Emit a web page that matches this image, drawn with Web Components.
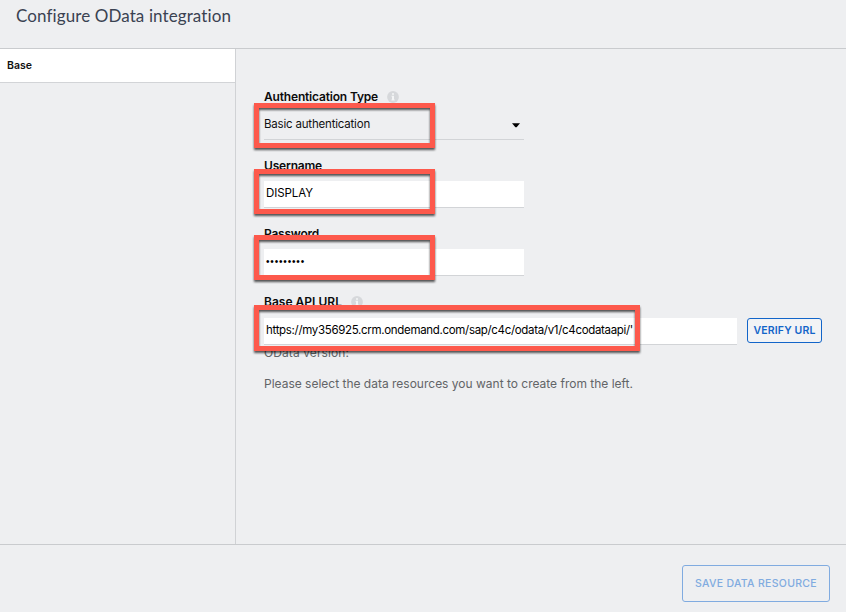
<!DOCTYPE html>
<html lang="en"><head><meta charset="utf-8"><title>Configure OData integration</title>
<style>html,body{margin:0;height:100%;overflow:hidden}body{font-family:Inter,"Open Sans",sans-serif;background:#eeeff1}</style></head>
<body>
<integration-dialog></integration-dialog>
<script>
const define = (name, html, init) => customElements.define(name, class extends HTMLElement {
  connectedCallback() {
    if (this.shadowRoot) return;
    this.attachShadow({mode: 'open'}).innerHTML = html;
    if (init) init(this, this.shadowRoot);
  }
});

// Text run tracked so that it spans the number of pixels given in "width".
define('fit-text', `<style>:host{display:inline-block;white-space:pre}span{display:inline-block}</style><span><slot></slot></span>`, (el, root) => {
  const s = root.querySelector('span');
  const n = el.textContent.length, target = +el.getAttribute('width');
  s.style.letterSpacing = (target - s.getBoundingClientRect().width) / n + 'px';
});

define('info-icon', `<style>:host{display:block;width:12px;height:12px}svg{display:block}</style>
<svg width="12" height="12" viewBox="0 0 12 12"><circle cx="6" cy="6" r="5.9" fill="#d6d8db"/><path d="M5 2.2h2v1.6H5zM4.5 4.8H7v3.7h.7v1H4.4v-1H5V5.8h-.5z" fill="#f4f5f6"/></svg>`);

define('call-out', `<style>:host{display:block;position:absolute;left:-10px;box-sizing:border-box;width:181px;height:45px;border:5px solid #fd594c;filter:drop-shadow(0 2px 1px rgba(0,0,0,.66));pointer-events:none}</style>`);

define('form-field', `<style>
:host{display:block;position:relative;width:260px}
.label{display:flex;align-items:center;gap:9px;height:20px;font-size:12px;font-weight:600;color:#0b0b0c}
::slotted(fit-text[slot=label]){padding-bottom:2px}
</style><div class="label"><slot name="label"></slot></div><slot></slot>`);

define('select-box', `<style>
:host{display:flex;align-items:center;justify-content:space-between;box-sizing:border-box;height:33px;border-bottom:1px solid #d2d4d7;font-size:11.5px;color:#111;padding:2px 4px 0 0}
svg{position:relative;top:1px}
</style><slot></slot><svg width="8" height="5" viewBox="0 0 8 5"><path d="M0 .3h8L4.6 4.2H3.4z" fill="#000"/></svg>`);

define('text-box', `<style>
:host{display:flex;align-items:center;box-sizing:border-box;height:27px;margin-top:5px;background:#fff;border-bottom:1px solid #d2d4d7;padding:0 2px 2px;font-size:11.5px;color:#000;overflow:hidden}
</style><slot></slot>`);

define('outline-button', `<style>
:host{display:flex;align-items:center;justify-content:center;box-sizing:border-box;border:1px solid var(--c);border-radius:3px;color:var(--c);font-weight:600;font-size:10.5px;flex:none}
</style><slot></slot>`);

define('integration-dialog', `<style>
:host{display:grid;grid-template-rows:49px 1fr 68px;width:846px;height:612px}
header{box-sizing:border-box;border-bottom:1px solid #c9cbce;padding:5px 16px;font-family:Lato,sans-serif;font-size:17px;line-height:22px;color:#3a4252}
.body{display:grid;grid-template-columns:236px 1fr;min-height:0}
aside{border-right:1px solid #d0d2d5}
.tab{box-sizing:border-box;height:34px;background:#fff;border-bottom:1px solid #d2d4d7;padding:0 7px;display:flex;align-items:center;font-size:10.5px;font-weight:600;color:#111}
main{padding:38px 0 0 28px}
form-field+form-field{margin-top:16px}
.url{width:558px}
.row{display:flex;gap:10px;margin-top:6px}
.row text-box{width:473px;margin:0}
.verify{--c:#1265c9;width:75px;height:25px;background:#f2f3f5}
.muted{font-size:12px;line-height:16px;color:#626467}
footer{box-sizing:border-box;border-top:1px solid #c9cbce;padding:20px 16px 0 0;display:flex;justify-content:flex-end;align-items:flex-start}
.save{--c:#80abe0;width:148px;height:37px;font-weight:500}
.dots{font-family:"Liberation Sans",sans-serif;font-size:10px;padding-top:1px}
</style>
<header><fit-text width="215">Configure OData integration</fit-text></header>
<div class="body">
<aside><div class="tab"><fit-text width="25">Base</fit-text></div></aside>
<main>
<form-field><fit-text slot="label" width="114">Authentication Type</fit-text><info-icon slot="label"></info-icon>
<select-box><fit-text width="106">Basic authentication</fit-text></select-box><call-out style="top:16px"></call-out></form-field>
<form-field><fit-text slot="label" width="58">Username</fit-text>
<text-box><fit-text width="47">DISPLAY</fit-text></text-box><call-out style="top:13px"></call-out></form-field>
<form-field><fit-text slot="label" width="55">Password</fit-text>
<text-box><fit-text class="dots" width="39">•••••••••</fit-text></text-box><call-out style="top:11px"></call-out></form-field>
<form-field class="url"><fit-text slot="label" width="78">Base API URL</fit-text><info-icon slot="label"></info-icon>
<div class="row"><text-box><fit-text width="367">https://my356925.crm.ondemand.com/sap/c4c/odata/v1/c4codataapi/'</fit-text></text-box>
<outline-button class="verify"><fit-text width="62">VERIFY URL</fit-text></outline-button></div><call-out style="top:13px;width:386px;height:46px"></call-out></form-field>
<div class="muted"><fit-text width="85">OData version:</fit-text></div>
<div class="muted" style="margin-top:15px"><fit-text width="369">Please select the data resources you want to create from the left.</fit-text></div>
</main></div>
<footer><outline-button class="save"><fit-text width="122">SAVE DATA RESOURCE</fit-text></outline-button></footer>`);
</script>
</body></html>
